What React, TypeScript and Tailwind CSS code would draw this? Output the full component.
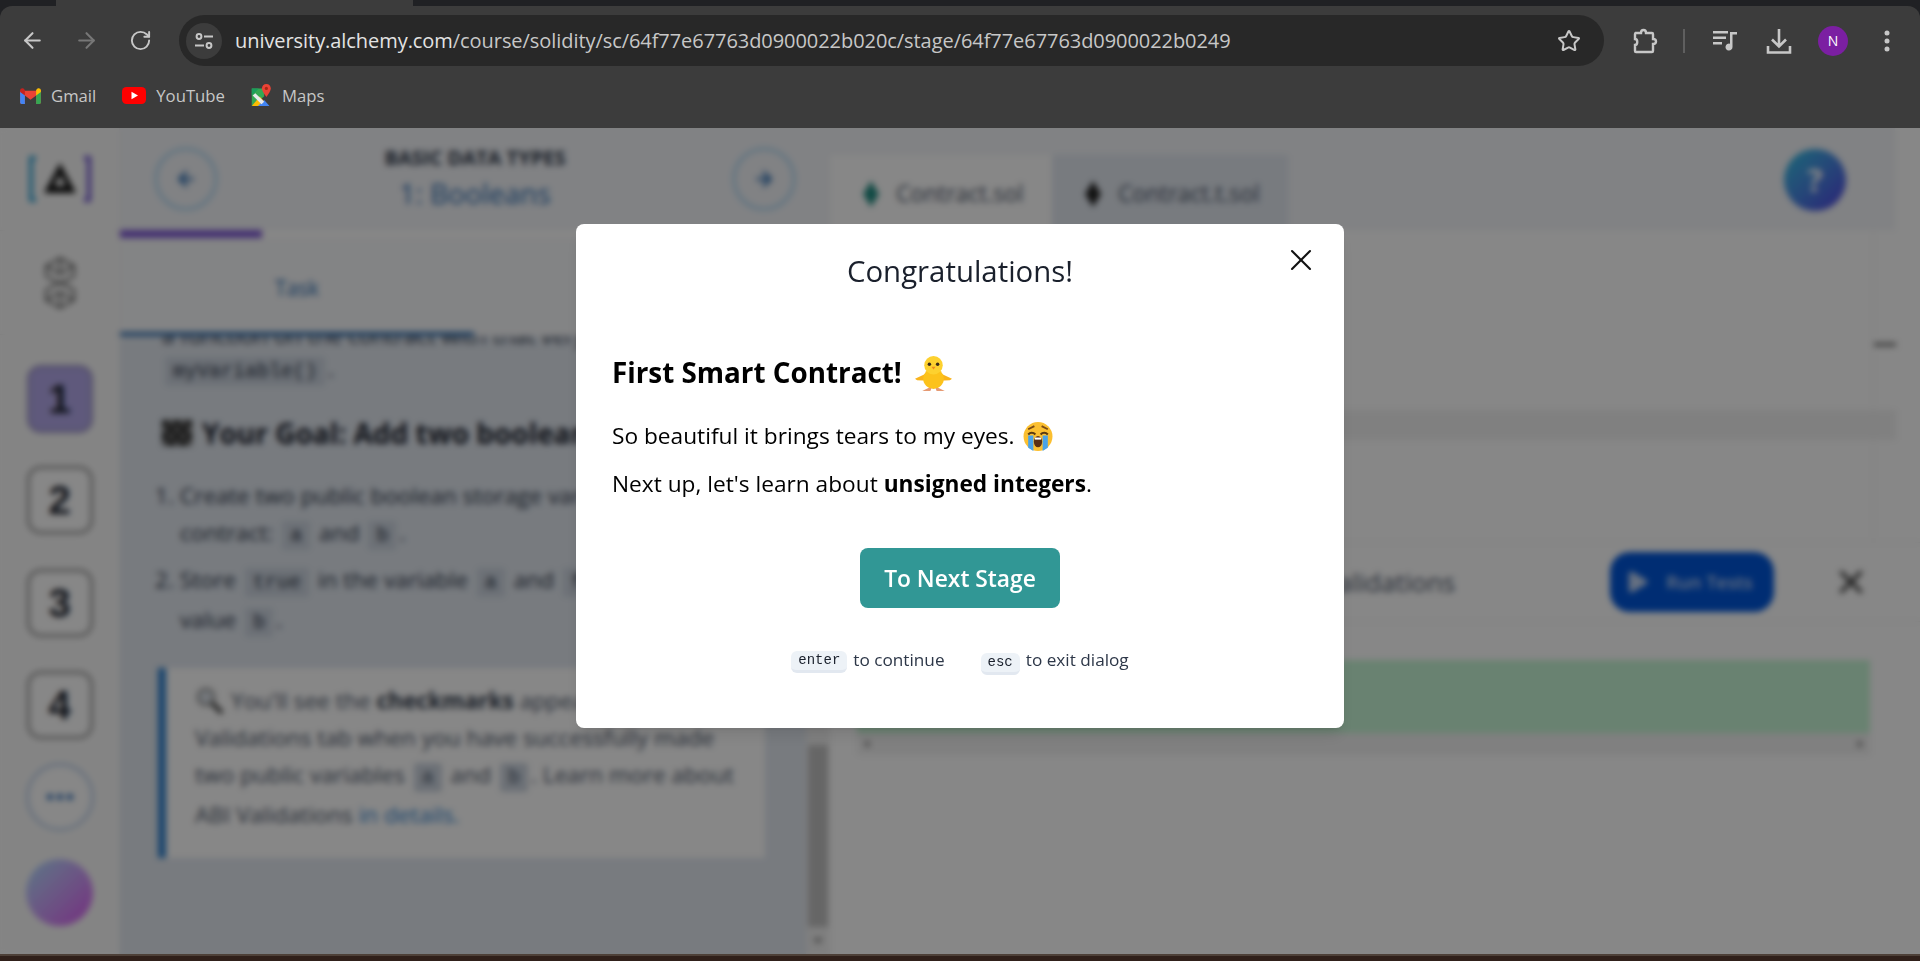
import { ArrowLeft, ArrowRight, Play, RotateCw, Star, X } from "lucide-react";
import type { ReactNode } from "react";

const UI_FONT = "font-['Open_Sans','Noto_Sans',sans-serif]";

function GmailIcon() {
  return (
    <svg width="21" height="16" viewBox="0 0 22 17">
      <path d="M0 3v12.5C0 16.3.7 17 1.500 17H5V8l6 4.500L17 8v9h3.500c.8 0 1.500-.7 1.500-1.500V3z" fill="#ea4335" />
      <path d="M0 3.500V15.500C0 16.300.7 17 1.500 17H5V7z" fill="#4285f4" />
      <path d="M17 7v10h3.500c.8 0 1.500-.7 1.500-1.500V3.500z" fill="#34a853" />
      <path d="M17 2v6l5-3.700V2.500C22 .5 19.700-.5 18.200.7z" fill="#fbbc04" />
      <path d="M0 2.500v1.800L5 8V2L3.800.7C2.300-.5 0 .5 0 2.500z" fill="#c5221f" />
    </svg>
  );
}

function YouTubeIcon() {
  return (
    <svg width="24" height="17" viewBox="0 0 24 17">
      <rect width="24" height="17" rx="4.500" fill="#ff0000" />
      <path d="M9.500 4.800v7.400L16 8.500z" fill="#fff" />
    </svg>
  );
}

function MapsIcon() {
  return (
    <svg width="21" height="23" viewBox="0 0 22 26">
      <path d="M0 5h14v9L0 25z" fill="#34a853" />
      <path d="M0 25 9 14l10 11z" fill="#fbbc04" />
      <path d="M7 25l7-7 6 7z" fill="#4285f4" />
      <path d="M0 5h8L0 13z" fill="#1a9e5c" />
      <path d="M4 10.500 14 20l-3 3L1 13z" fill="#e8eaed" />
      <path d="M16.500 0C13.500 0 11.500 2.200 11.500 5c0 3.500 5 9.500 5 9.500s5-6 5-9.500c0-2.800-2-5-5-5z" fill="#ea4335" />
      <circle cx="16.500" cy="5" r="1.800" fill="#a52714" />
    </svg>
  );
}

function BookmarkItem({ icon, label }: { icon: ReactNode; label: string }) {
  return (
    <div className="flex items-center gap-[10px]">
      {icon}
      <span className="text-[16.700px] text-[#c7c7c7]">{label}</span>
    </div>
  );
}

function BrowserChrome() {
  return (
    <div className="bg-[#202124] h-[128px] shrink-0">
      <div className="h-[6px] flex">
        <div className="ml-[56px] w-[357px] bg-[#3c3c3c]" />
      </div>
      <div className="h-[122px] bg-[#3c3c3c] rounded-t-[12px] pt-[9px] px-[20px]">
        <div className="flex items-center h-[51px]">
          <ArrowLeft size={25} strokeWidth={2} className="text-[#c7c7c7]" />
          <ArrowRight size={25} strokeWidth={2} className="text-[#777] ml-[29px]" />
          <RotateCw size={23} strokeWidth={2} className="text-[#c7c7c7] ml-[30px]" />
          <div className="ml-[27px] w-[1425px] h-[51px] bg-[#282828] rounded-full flex items-center pl-[7px] pr-[23px]">
            <div className="w-[36px] h-[36px] rounded-full bg-[#3c3c3c] flex items-center justify-center">
              <svg width="20" height="20" viewBox="0 0 20 20" fill="none" stroke="#c7c7c7" strokeWidth="2">
                <circle cx="5" cy="5.500" r="2.400" />
                <path d="M10 5.500h9M1 14.500h9" />
                <circle cx="15" cy="14.500" r="2.400" />
              </svg>
            </div>
            <div className="ml-[13px] text-[20px] tracking-[-0.06px] whitespace-nowrap">
              <span className="text-[#e3e3e3]">university.alchemy.com</span>
              <span className="text-[#c7c7c7]">/course/solidity/sc/64f77e67763d0900022b020c/stage/64f77e67763d0900022b0249</span>
            </div>
            <Star size={24} strokeWidth={2} className="ml-auto text-[#c7c7c7]" />
          </div>
          <svg className="ml-[28px]" width="26" height="28" viewBox="0 0 26 28" fill="none" stroke="#c7c7c7" strokeWidth="2.400">
            <path d="M3 6h6c0-4 5-4 5 0h6c.6 0 1 .4 1 1v5c4 0 4 5 0 5v7c0 .6-.4 1-1 1H4c-.6 0-1-.4-1-1v-6c3 0 3-6 0-6V7c0-.6.4-1 1-1z" />
          </svg>
          <div className="ml-[25px] w-[2px] h-[24px] bg-[#5f5f5f]" />
          <svg className="ml-[27px]" width="26" height="26" viewBox="0 0 26 26" fill="#c7c7c7">
            <path d="M1 3h15v2.500H1zM1 8.500h13V11H1zM1 14h9v2.500H1z" />
            <path d="M18 4h7v2.500h-4.500V19a3.500 3.500 0 1 1-2.500-3.300z" />
          </svg>
          <svg className="ml-[28px]" width="26" height="28" viewBox="0 0 26 28" fill="none" stroke="#c7c7c7" strokeWidth="2.600">
            <path d="M13 2v17M6 12.500l7 7 7-7M2 19v6.500h22V19" />
          </svg>
          <div className="ml-[26px] w-[30px] h-[30px] rounded-full bg-[#7b1fa2] text-white text-[14px] flex items-center justify-center">N</div>
          <svg className="ml-[36px]" width="6" height="24" viewBox="0 0 6 24" fill="#c7c7c7">
            <circle cx="3" cy="4" r="2.500" />
            <circle cx="3" cy="12" r="2.500" />
            <circle cx="3" cy="20" r="2.500" />
          </svg>
        </div>
        <div className="flex items-center gap-[26px] mt-[17px]">
          <BookmarkItem icon={<GmailIcon />} label="Gmail" />
          <BookmarkItem icon={<YouTubeIcon />} label="YouTube" />
          <BookmarkItem icon={<MapsIcon />} label="Maps" />
        </div>
      </div>
    </div>
  );
}

function StageButton({ label, active }: { label: string; active?: boolean }) {
  return (
    <div
      className={
        "w-[66px] h-[68px] rounded-[14px] border-[3px] flex items-center justify-center text-[40px] font-bold text-[#1a202c] font-['Liberation_Sans',sans-serif] " +
        (active ? "bg-[#b3a9ea] border-[#9f97c8]" : "bg-white border-[#999]")
      }
    >
      {label}
    </div>
  );
}

function Sidebar() {
  return (
    <div className="w-[120px] shrink-0 bg-[#fafafa] border-r border-[#f0f0f0] flex flex-col items-center">
      <div className="h-[103px] w-full border-b border-[#eee] flex items-center justify-center">
        <svg width="62" height="46" viewBox="0 0 62 46" fill="none">
          <path d="M7 2H2v42h5" stroke="#2fa3d6" strokeWidth="4" />
          <path d="M55 2h5v42h-5" stroke="#6b4fd0" strokeWidth="4" />
          <path d="M31 7 47 37H15z" fill="#111" />
          <path d="M31 19l6 11H25z" fill="#fafafa" />
        </svg>
      </div>
      <div className="h-[104px] w-full border-b border-[#eee] flex items-center justify-center">
        <svg width="32" height="52" viewBox="0 0 32 52" fill="none" stroke="#333" strokeWidth="1.500">
          <path d="M16 1 30 9v10L16 27 2 19V9zM2 9l14 8 14-8M16 1v16" />
          <path d="M16 25l14 8v10l-14 8-14-8V33zM2 43l14-8 14 8M16 51V35" />
        </svg>
      </div>
      <div className="mt-[30px]"><StageButton label="1" active /></div>
      <div className="mt-[33px]"><StageButton label="2" /></div>
      <div className="mt-[35px]"><StageButton label="3" /></div>
      <div className="mt-[34px]"><StageButton label="4" /></div>
      <div className="mt-[24px] w-[68px] h-[68px] rounded-full border-[3px] border-[#bcd0ea] bg-white flex items-center justify-center gap-[4px]">
        <span className="w-[6px] h-[6px] rounded-full bg-[#1a5fb0]" />
        <span className="w-[6px] h-[6px] rounded-full bg-[#1a5fb0]" />
        <span className="w-[6px] h-[6px] rounded-full bg-[#1a5fb0]" />
      </div>
      <div className="mt-[28px] w-[67px] h-[67px] rounded-full bg-gradient-to-br from-[#a8e0ff] to-[#d850f0]" />
    </div>
  );
}

function CircleNav({ children }: { children: ReactNode }) {
  return (
    <div className="w-[62px] h-[62px] rounded-full border-2 border-[#90cdf4] flex items-center justify-center text-[#2b6cb0]">
      {children}
    </div>
  );
}

function Code({ children }: { children: ReactNode }) {
  return (
    <code className="bg-[#cdd5e0] rounded-[3px] px-[8px] py-[3px] mx-[3px] text-[20px] font-['Liberation_Mono',monospace]">
      {children}
    </code>
  );
}

function LessonPanel() {
  return (
    <div className="w-[710px] shrink-0 flex flex-col bg-[#e2e8f0]">
      <div className="h-[102px] shrink-0 bg-[#f3f5f9] flex items-center justify-between pl-[35px] pr-[35px]">
        <CircleNav><ArrowLeft size={22} strokeWidth={3} /></CircleNav>
        <div className="flex flex-col items-center">
          <div className="text-[20px] font-bold text-[#2d3748] leading-[24px]">BASIC DATA TYPES</div>
          <div className="mt-[3px] text-[28px] text-[#2b6cb0] leading-[40px]">1: Booleans</div>
        </div>
        <CircleNav><ArrowRight size={22} strokeWidth={3} /></CircleNav>
      </div>
      <div className="h-[8px] shrink-0 bg-white">
        <div className="w-[142px] h-full bg-[#805ad5]" />
      </div>
      <div className="h-[98px] shrink-0 bg-[#f8f9fb]">
        <div className="w-[354px] h-full border-b-4 border-[#2b6cb0] pt-[8px] flex items-center justify-center text-[21px] text-[#2b6cb0]">
          Task
        </div>
      </div>
      <div className="flex flex-1 min-h-0">
        <div className="w-[686px] pl-[42px] text-[#2d3748] text-[22.700px] leading-[37px] overflow-hidden">
          <div className="-mt-[19px] mb-[-4px] whitespace-nowrap">a function on the contract with that very name:</div>
          <div><Code>myVariable()</Code>.</div>
          <div className="mt-[18px] text-[28px] leading-[50px] font-bold text-[#1a202c] whitespace-nowrap flex items-center gap-[10px]">
            <svg width="30" height="26" viewBox="0 0 30 26">
              <rect width="30" height="26" fill="#777" />
              <path d="M0 0h6v6H0zM12 0h6v6h-6zM24 0h6v6h-6zM6 6h6v7H6zM18 6h6v7h-6zM0 13h6v7H0zM12 13h6v7h-6zM24 13h6v7h-6zM6 20h6v6H6zM18 20h6v6h-6z" fill="#222" />
            </svg>
            Your Goal: Add two boolean variables
          </div>
          <div className="-ml-[7px] mt-[19px] whitespace-nowrap">1. Create two public boolean storage variables on the</div>
          <div className="pl-[18px]">contract: <Code>a</Code> and <Code>b</Code>.</div>
          <div className="-ml-[7px] mt-[7px] whitespace-nowrap">2. Store <Code>true</Code> in the variable <Code>a</Code> and <Code>false</Code> in the</div>
          <div className="pl-[18px]">value <Code>b</Code>.</div>
          <div className="-ml-[4px] mt-[27px] w-[607px] h-[190px] bg-white border-l-[8px] border-[#3182ce] pl-[29px] pt-[14px] text-[#4a5568]">
            <div className="whitespace-nowrap flex items-center gap-[6px]">
              <svg width="30" height="30" viewBox="0 0 30 30" fill="none">
                <circle cx="11" cy="11" r="8" stroke="#999" strokeWidth="3" fill="#dfe6ee" />
                <path d="M17 17l10 10" stroke="#333" strokeWidth="4" />
              </svg>
              <span>You'll see the <b className="text-[#2d3748]">checkmarks</b> appear on the</span>
            </div>
            <div className="whitespace-nowrap">Validations tab when you have successfully made</div>
            <div className="whitespace-nowrap">two public variables <Code>a</Code> and <Code>b</Code>. Learn more about</div>
            <div className="whitespace-nowrap">ABI Validations <span className="text-[#3182ce]">in details.</span></div>
          </div>
        </div>
        <div className="w-[24px] bg-[#f1f1f1] flex flex-col items-center justify-end pb-[10px]">
          <div className="w-[20px] h-[182px] bg-[#c1c1c1]" />
          <div className="mt-[11px] w-0 h-0 border-x-[5px] border-x-transparent border-t-[6px] border-t-[#888]" />
        </div>
      </div>
    </div>
  );
}

function EditorPanel() {
  return (
    <div className="flex-1 flex flex-col bg-white min-w-0">
      <div className="h-[102px] shrink-0 flex">
        <div className="flex-1 bg-[#f3f5f9] flex items-end">
          <div className="w-[222px] h-[75px] bg-white flex items-center pl-[33px] pt-[3px] gap-[17px] text-[22.800px] text-[#4a5568]">
            <svg width="16" height="26" viewBox="0 0 16 26"><path d="M8 0l8 13-8 13-8-13z" fill="#1f8a80" /></svg>
            Contract.sol
          </div>
          <div className="w-[236px] h-[75px] bg-[#e2e8f0] flex items-center pl-[33px] pt-[3px] gap-[17px] text-[22.800px] text-[#4a5568]">
            <svg width="16" height="26" viewBox="0 0 16 26"><path d="M8 0l8 13-8 13-8-13z" fill="#222" /></svg>
            Contract.t.sol
          </div>
          <div className="ml-auto mr-[49px] mb-[19px] w-[62px] h-[62px] rounded-full bg-gradient-to-br from-[#2fc4e0] to-[#5038e0] flex items-center justify-center text-white text-[32px] font-bold">?</div>
        </div>
        <div className="w-[25px]" />
      </div>
      <div className="h-[312px] shrink-0 flex">
        <div className="flex-1 pt-[180px] flex">
          <div className="w-full h-[30px] bg-[#f2f2f2]" />
        </div>
        <div className="w-[47px] pt-[113px] border-l border-[#f0f0f0] flex flex-col">
          <div className="w-[22px] h-[3px] bg-[#555]" />
          <div className="mt-[64px] w-[22px] h-[30px] bg-[#f2f2f2]" />
        </div>
      </div>
      <div className="h-[80px] shrink-0 border-y border-[#f0f0f0] flex items-center pr-[50px]">
        <div className="ml-[492px] text-[26px] text-[#4a5568] whitespace-nowrap">Validations</div>
        <div className="ml-auto w-[164px] h-[60px] rounded-[20px] bg-[#0056da] flex items-center pl-[13px] gap-[15px]">
          <Play size={28} fill="#c0d4f4" strokeWidth={0} />
          <span className="text-[18.500px] font-semibold text-[#c0d4f4]">Run Tests</span>
        </div>
        <X size={38} strokeWidth={2.200} className="ml-[58px] text-[#333]" />
      </div>
      <div className="ml-[27px] mt-[38px] w-[1013px] h-[73px] bg-[#c6f6d5]" />
      <div className="ml-[27px] w-[1013px] h-[22px] bg-[#f1f1f1] flex items-center justify-between px-[7px] text-[#777]">
        <div className="w-0 h-0 border-y-[4px] border-y-transparent border-r-[5px] border-r-[#777]" />
        <div className="w-0 h-0 border-y-[4px] border-y-transparent border-l-[5px] border-l-[#777]" />
      </div>
    </div>
  );
}

function ChickEmoji() {
  return (
    <svg width="37" height="37" viewBox="0 0 36 36" className="ml-[13px]">
      <path d="M11 18 0 23l2 1.500 10 .5zM25 18l11 5-2 1.500-10 .5z" fill="#f9b41d" />
      <ellipse cx="18" cy="23" rx="10" ry="10" fill="#fcc21b" />
      <circle cx="18" cy="10" r="9" fill="#fdd12f" />
      <circle cx="14" cy="9" r="1.700" fill="#3a2a1a" />
      <circle cx="22" cy="9" r="1.700" fill="#3a2a1a" />
      <path d="M16 11.500h4l-2 2.500z" fill="#f08a1d" />
      <path d="M7 35l6-3h3l-1 3zM29 35l-6-3h-3l1 3z" fill="#e69a73" />
    </svg>
  );
}

function SobEmoji() {
  return (
    <svg width="30" height="31" viewBox="0 0 29 30" className="ml-[8px]">
      <circle cx="14.500" cy="15" r="14" fill="#fbbf30" />
      <path d="M5 8l6-3M24 8l-6-3" stroke="#7a4a14" strokeWidth="1.800" fill="none" />
      <path d="M5 13c2-2 5-2 7 0M17 13c2-2 5-2 7 0" stroke="#5a3a10" strokeWidth="2" fill="none" />
      <path d="M5 14h5v15l-5-3zM19 14h5v12l-5 3z" fill="#4aa3e8" />
      <ellipse cx="14.500" cy="20" rx="4" ry="5.500" fill="#5a2e12" />
      <path d="M11.500 16h6v2h-6z" fill="#fff" />
    </svg>
  );
}

function Kbd({ children }: { children: ReactNode }) {
  return (
    <kbd className="inline-flex items-center h-[22px] px-[7px] rounded-[6px] bg-[#edf2f7] border-b-[3px] border-[#e2e8f0] text-[#1a202c] text-[14px] font-['Liberation_Mono',monospace]">
      {children}
    </kbd>
  );
}

function CongratsModal() {
  return (
    <div className="w-[768px] h-[504px] bg-white rounded-[8px] shadow-lg flex flex-col relative">
      <div className="pt-[27px] text-center text-[29.400px] leading-[40px] text-[#1a202c]">Congratulations!</div>
      <button className="absolute top-[18px] right-[25px] text-[#111]">
        <X size={36} strokeWidth={1.400} />
      </button>
      <div className="mt-[60px] pl-[36px] flex items-center h-[44px] text-[27.800px] font-bold text-black">
        First Smart Contract!
        <ChickEmoji />
      </div>
      <div className="mt-[25px] pl-[36px] text-[22.700px] leading-[32px] text-black flex items-center">
        So beautiful it brings tears to my eyes.
        <SobEmoji />
      </div>
      <div className="mt-[16px] pl-[36px] text-[22.700px] leading-[32px] text-black">
        Next up, let's learn about <b>unsigned integers</b>.
      </div>
      <div className="mt-[48px] flex justify-center">
        <button className="w-[200px] h-[60px] rounded-[8px] bg-[#319795] pt-[3px] text-white text-[22.800px] font-semibold">To Next Stage</button>
      </div>
      <div className="mt-[43px] flex justify-center items-start text-[17.200px] leading-[17px] text-[#2d3748]">
        <Kbd>enter</Kbd>
        <span className="ml-[6px]">to continue</span>
        <span className="ml-[36px]"><Kbd>esc</Kbd></span>
        <span className="ml-[6px]">to exit dialog</span>
      </div>
    </div>
  );
}

export default function App() {
  return (
    <div className={"w-[1920px] h-[961px] overflow-hidden flex flex-col " + UI_FONT}>
      <BrowserChrome />
      <div className="relative flex-1 flex min-h-0">
        <Sidebar />
        <LessonPanel />
        <EditorPanel />
        {/* dimmed, blurred backdrop of the dialog */}
        <div className="absolute inset-0 bg-black/[.47] backdrop-blur-[3px] flex justify-center pt-[96px]">
          <CongratsModal />
        </div>
      </div>
      <div className="h-[7px] shrink-0 bg-[#30201a] border-t-2 border-[#4d4038]" />
    </div>
  );
}
